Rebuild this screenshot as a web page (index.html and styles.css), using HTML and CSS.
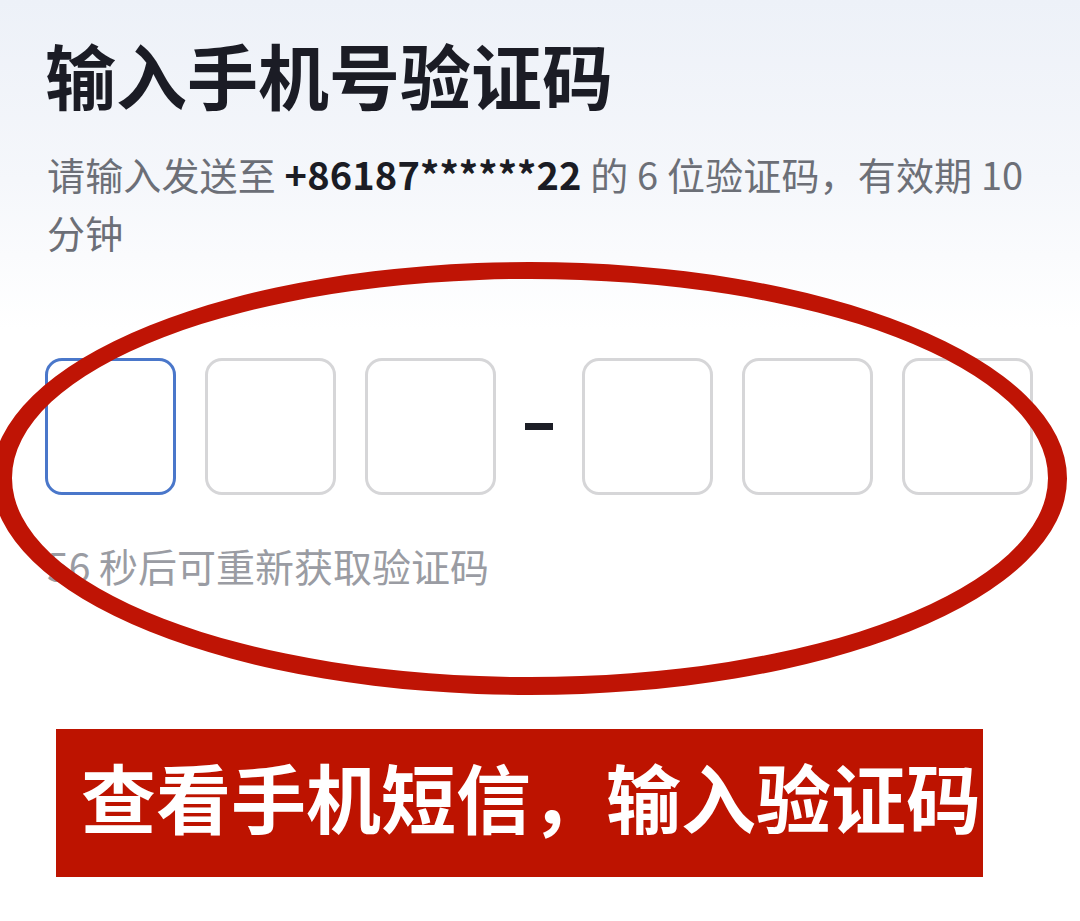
FILE: index.html
```html
<!DOCTYPE html>
<html lang="zh-CN">
<head>
<meta charset="utf-8">
<title>输入手机号验证码</title>
<link rel="stylesheet" href="styles.css">
</head>
<body>
<main class="page">
  <h1 class="title">输入手机号验证码</h1>
  <p class="subtitle">请输入发送至 <b class="phone">+86187******22</b> 的 6 位验证码，有效期 10<br>分钟</p>
  <div class="code-row">
    <div class="group">
      <div class="cell active"></div>
      <div class="cell"></div>
      <div class="cell"></div>
    </div>
    <div class="sep"><span class="dash"></span></div>
    <div class="group">
      <div class="cell"></div>
      <div class="cell"></div>
      <div class="cell"></div>
    </div>
  </div>
  <p class="countdown">56 秒后可重新获取验证码</p>
  <div class="banner">查看手机短信，输入验证码</div>
</main>
<svg class="ring" width="1080" height="921" viewBox="0 0 1080 921" aria-hidden="true">
  <path fill="#bf1405" fill-rule="evenodd" d="M -8 478.5 A 537.5 216.5 0 1 0 1067 478.5 A 537.5 216.5 0 1 0 -8 478.5 Z M 12 478 A 518 199 0 1 1 1048 478 A 518 199 0 1 1 12 478 Z"/>
</svg>
</body>
</html>
```

FILE: styles.css
```css
* { box-sizing: border-box; }
html, body { margin: 0; padding: 0; }
body {
  width: 1080px;
  height: 921px;
  overflow: hidden;
  position: relative;
  background: linear-gradient(180deg, #edf1f8 0px, #f5f7fb 180px, #ffffff 330px);
  font-family: "Noto Sans CJK SC", "Noto Sans", sans-serif;
}
.page {
  padding: 23px 45px 0 45px;
  display: flex;
  flex-direction: column;
}
.title {
  margin: 0;
  font-size: 71px;
  line-height: 100px;
  font-weight: 700;
  color: #1b1c25;
  letter-spacing: 0;
}
.subtitle {
  margin: 22px 0 0 2px;
  font-size: 38px;
  line-height: 58px;
  color: #6c6f77;
  white-space: nowrap;
  letter-spacing: 0.15px;
}
.phone {
  font-weight: 700;
  color: #1b1c24;
}
.code-row {
  margin-top: 97px;
  display: flex;
  align-items: center;
}
.group {
  display: flex;
  gap: 29px;
}
.cell {
  width: 131px;
  height: 137px;
  border: 3px solid #d6d6d8;
  border-radius: 17px;
  background: #fff;
}
.cell.active {
  border-color: #4a77ca;
}
.sep {
  width: 86px;
  display: flex;
  justify-content: center;
  align-items: center;
}
.dash {
  width: 28px;
  height: 7px;
  background: #1c1e26;
}
.countdown {
  margin: 45px 0 0 2px;
  font-size: 39px;
  line-height: 50px;
  color: #9a9ca3;
}
.banner {
  margin: 139px 0 0 11px;
  width: 927px;
  height: 148px;
  background: #bd1300;
  color: #ffffff;
  font-size: 75px;
  line-height: 134px;
  font-weight: 700;
  padding-left: 25px;
  white-space: nowrap;
  font-family: "Noto Sans CJK SC", sans-serif;
}
.ring {
  position: absolute;
  top: 0;
  left: 0;
  pointer-events: none;
}
```
